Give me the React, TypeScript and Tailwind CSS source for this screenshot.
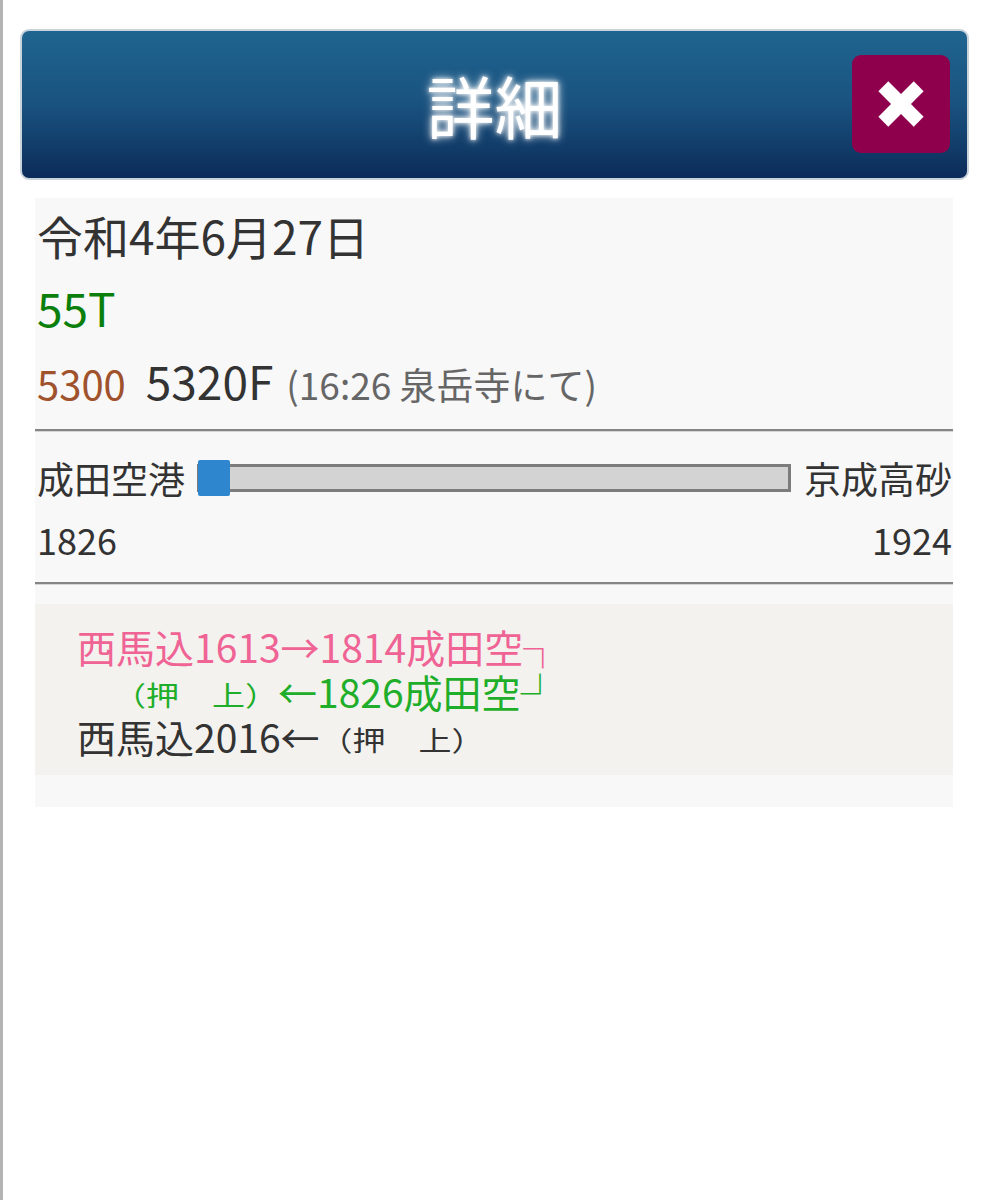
import React from "react";

const font = { fontFamily: '"Noto Sans CJK JP", "Noto Sans", sans-serif' };

function Oshiage() {
  return (
    <span className="inline-block text-[33px] leading-[45px] scale-y-[0.82] origin-center">（押　上）</span>
  );
}

export default function App() {
  return (
    <div
      className="min-h-[1200px] w-[987px] bg-white border-l-[3px] border-[#b4b4b4] pt-[29px] pl-[17px]"
      style={font}
    >
      <div className="relative w-[949px] h-[151px] rounded-[9px] border-2 border-[#c9d3db] bg-gradient-to-b from-[#1f6590] via-[#1a527f] to-[#0c2c5a] flex items-center justify-center">
        <span className="text-[68px] leading-none text-white font-normal [text-shadow:0_0_10px_#ffffff,0_0_4px_#ffffff]">
          詳細
        </span>
        <button className="absolute right-[17px] top-[24px] w-[98px] h-[98px] rounded-[9px] bg-[#8e004c] flex items-center justify-center">
          <svg width="48" height="48" viewBox="0 0 48 48">
            <g transform="rotate(45 24 24)" fill="#ffffff">
              <rect x="-1" y="17" width="50" height="14" />
              <rect x="17" y="-1" width="14" height="50" />
            </g>
          </svg>
        </button>
      </div>

      <div className="mt-[18px] ml-[15px] w-[918px] bg-[#f8f8f8] pb-[32px]">
        <div className="pl-[2px] pt-[8px] text-[46px] leading-[58px] text-[#333333]">令和4年6月27日</div>
        <div className="pl-[2px] mt-[14px] text-[46px] leading-[58px] text-[#0b7f0b]">55T</div>
        <div className="pl-[2px] mt-[14px] flex items-baseline leading-[60px]">
          <span className="text-[40px] text-[#a0522d]">5300</span>
          <span className="ml-[20px] text-[46px] text-[#333333]">5320F</span>
          <span className="ml-[13px] text-[37px] text-[#666666]">(16:26 泉岳寺にて)</span>
        </div>
        <div className="mt-[15px] border-t-[2px] border-[#858585] border-b border-b-[#d6d6d6]" />
        <div className="mt-[23px] flex items-center text-[37px] leading-[46px] text-[#333333]">
          <span className="pl-[2px]">成田空港</span>
          <div className="relative ml-[12px] w-[594px] h-[28px] border-[3px] border-[#7c7c7c] bg-[#d3d3d3]">
            <div className="absolute left-[-2px] top-[-7px] w-[32px] h-[36px] bg-[#2e86cf] rounded-[2px]" />
          </div>
          <span className="ml-auto pr-[1px]">京成高砂</span>
        </div>
        <div className="mt-[15px] flex justify-between text-[36px] leading-[46px] text-[#333333]">
          <span className="pl-[2px]">1826</span>
          <span className="pr-[1px]">1924</span>
        </div>
        <div className="mt-[20px] border-t-[2px] border-[#858585] border-b border-b-[#d6d6d6]" />
        <div className="mt-[19px] bg-[#f3f2ef] pl-[42px] pt-[20px] pb-[16px] text-[39px] leading-[45px]">
          <div className="h-[45px] text-[#ef6494] whitespace-nowrap">西馬込1613→1814成田空┐</div>
          <div className="h-[45px] text-[#1fae2a] whitespace-nowrap">
            <span className="ml-[36px]"><Oshiage /></span>
            <span>←1826成田空┘</span>
          </div>
          <div className="h-[45px] text-[#333333] whitespace-nowrap">
            西馬込2016←<Oshiage />
          </div>
        </div>
      </div>
    </div>
  );
}
